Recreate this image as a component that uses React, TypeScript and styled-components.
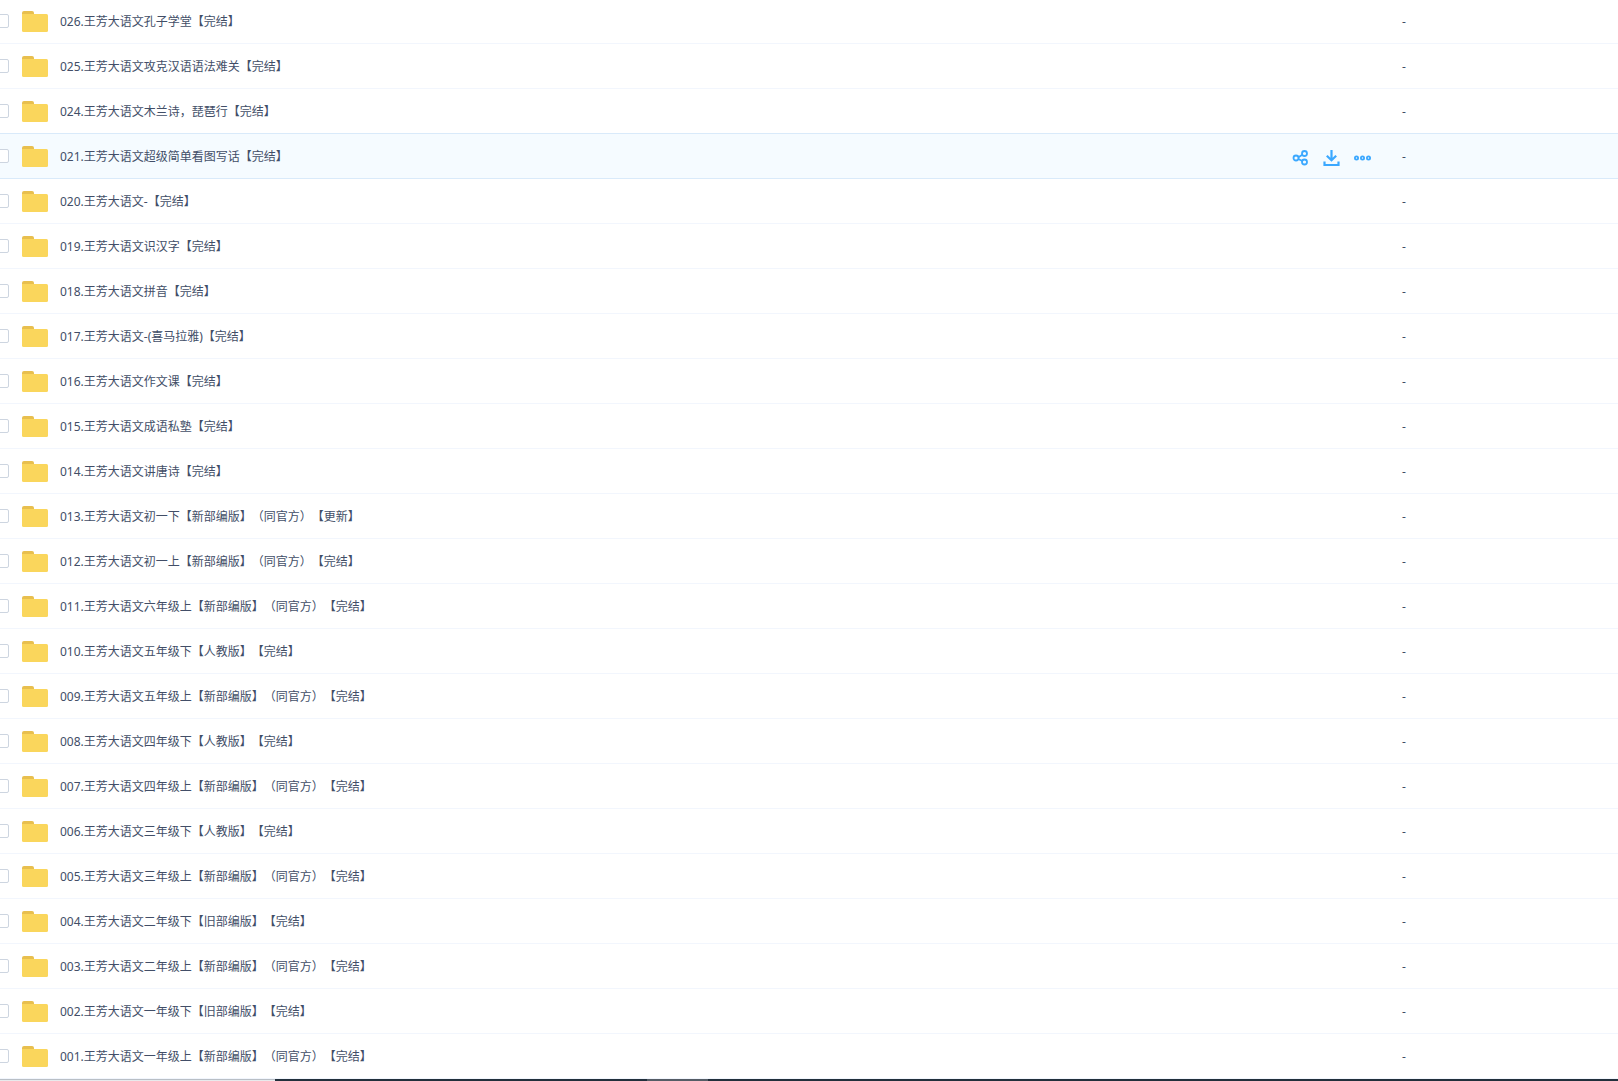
import React, { useState } from "react";
import styled, { createGlobalStyle, css } from "styled-components";

const GlobalStyle = createGlobalStyle`
  * { box-sizing: border-box; }
  body {
    margin: 0;
    background: #fff;
    color: #424e67;
    font: 12px/18px "Noto Sans", "Noto Sans CJK SC", sans-serif;
    text-spacing-trim: space-all;
  }
`;

const Page = styled.main`
  min-height: 100vh;
  overflow: hidden;
  display: flex;
  flex-direction: column;
`;

const FileTable = styled.table`
  width: 100%;
  table-layout: fixed;
  border-collapse: separate;
  border-spacing: 0;
  margin-top: -1px;
`;

const NameCol = styled.col`
  width: auto;
`;

const ActionCol = styled.col`
  width: 110px;
`;

const SizeCol = styled.col`
  width: 216px;
`;

const Row = styled.tr<{ $active: boolean }>`
  height: 45px;
  td {
    padding: 2px 0 0;
    border-bottom: 1px solid #f2f6fd;
  }
  &:has(+ tr[aria-selected="true"]) td {
    border-bottom-color: #d9eafa;
  }
  ${(p) =>
    p.$active &&
    css`
      background: #f5fbff;
      td {
        border-bottom-color: #d9eafa;
      }
    `}
`;

const NameCell = styled.div`
  display: flex;
  align-items: center;
`;

const Check = styled.input`
  appearance: none;
  flex: none;
  width: 14px;
  height: 14px;
  margin: 0 13px 2px -5px;
  border: 1px solid #cdd5e0;
  border-radius: 2px;
  background: #fff;
  &:checked {
    background: #3ba8ff;
  }
`;

const Folder = styled.svg`
  flex: none;
  width: 26px;
  height: 22px;
  margin-right: 12px;
`;

const FileLink = styled.a`
  color: inherit;
  text-decoration: none;
  white-space: nowrap;
`;

const Actions = styled.div`
  display: flex;
  gap: 14px;
  padding-top: 1px;
`;

const ActionButton = styled.button`
  width: 17px;
  height: 17px;
  padding: 0;
  border: 0;
  background: none;
  color: #3ba8ff;
  svg {
    display: block;
    width: 17px;
    height: 17px;
  }
`;

const BottomBar = styled.footer`
  display: flex;
  height: 2px;
  background: #22303c;
`;

const StatusPart = styled.div`
  flex: 0 0 17%;
  background: #e8eaec;
  border-top: 1px solid #b9bfc6;
`;

const ActivePart = styled.div`
  flex: 0 0 61px;
  margin-left: 23%;
  background: #555d66;
`;

const files = [
  "026.王芳大语文孔子学堂【完结】",
  "025.王芳大语文攻克汉语语法难关【完结】",
  "024.王芳大语文木兰诗，琵琶行【完结】",
  "021.王芳大语文超级简单看图写话【完结】",
  "020.王芳大语文-【完结】",
  "019.王芳大语文识汉字【完结】",
  "018.王芳大语文拼音【完结】",
  "017.王芳大语文-(喜马拉雅)【完结】",
  "016.王芳大语文作文课【完结】",
  "015.王芳大语文成语私塾【完结】",
  "014.王芳大语文讲唐诗【完结】",
  "013.王芳大语文初一下【新部编版】（同官方）【更新】",
  "012.王芳大语文初一上【新部编版】（同官方）【完结】",
  "011.王芳大语文六年级上【新部编版】（同官方）【完结】",
  "010.王芳大语文五年级下【人教版】【完结】",
  "009.王芳大语文五年级上【新部编版】（同官方）【完结】",
  "008.王芳大语文四年级下【人教版】【完结】",
  "007.王芳大语文四年级上【新部编版】（同官方）【完结】",
  "006.王芳大语文三年级下【人教版】【完结】",
  "005.王芳大语文三年级上【新部编版】（同官方）【完结】",
  "004.王芳大语文二年级下【旧部编版】【完结】",
  "003.王芳大语文二年级上【新部编版】（同官方）【完结】",
  "002.王芳大语文一年级下【旧部编版】【完结】",
  "001.王芳大语文一年级上【新部编版】（同官方）【完结】",
];

function FolderIcon() {
  return (
    <Folder viewBox="0 0 26 22" aria-hidden="true">
      <path d="M0 6V2Q0 0 2 0H10Q12 0 12 2V6Z" fill="#e8bf4e" />
      <path d="M0 3H24.5Q26 3 26 4.5V19.5Q26 21 24.5 21H1.5Q0 21 0 19.5Z" fill="#fad65c" />
    </Folder>
  );
}

function RowActions() {
  return (
    <Actions>
      <ActionButton type="button" aria-label="分享">
        <svg viewBox="0 0 17 17" fill="none" stroke="currentColor" strokeWidth="1.8">
          <circle cx="4" cy="9" r="2.5" />
          <circle cx="12.5" cy="4.5" r="2.5" />
          <circle cx="12.5" cy="13" r="2.5" />
          <path d="M6.5 8.2 10.3 5.8M6.4 10 10.3 12" />
        </svg>
      </ActionButton>
      <ActionButton type="button" aria-label="下载">
        <svg viewBox="0 0 17 17" fill="none" stroke="currentColor" strokeWidth="2.2">
          <path d="M8.5 1V11M3.8 6.8 8.5 11.3 13.2 6.8M1.5 12.5V16H15.5V12.5" />
        </svg>
      </ActionButton>
      <ActionButton type="button" aria-label="更多">
        <svg viewBox="0 0 17 17" fill="none" stroke="currentColor" strokeWidth="1.8">
          <circle cx="2.5" cy="9" r="1.6" />
          <circle cx="8.5" cy="9" r="1.6" />
          <circle cx="14.5" cy="9" r="1.6" />
        </svg>
      </ActionButton>
    </Actions>
  );
}

export default function App() {
  const [active, setActive] = useState(3);
  return (
    <Page>
      <GlobalStyle />
      <FileTable>
        <colgroup>
          <NameCol />
          <ActionCol />
          <SizeCol />
        </colgroup>
        <tbody>
          {files.map((name, i) => (
            <Row
              key={name}
              $active={i === active}
              aria-selected={i === active}
              onClick={() => setActive(i)}
            >
              <td>
                <NameCell>
                  <Check type="checkbox" aria-label={name} />
                  <FolderIcon />
                  <FileLink href="#">{name}</FileLink>
                </NameCell>
              </td>
              <td>{i === active && <RowActions />}</td>
              <td>-</td>
            </Row>
          ))}
        </tbody>
      </FileTable>
      <BottomBar>
        <StatusPart />
        <ActivePart />
      </BottomBar>
    </Page>
  );
}
